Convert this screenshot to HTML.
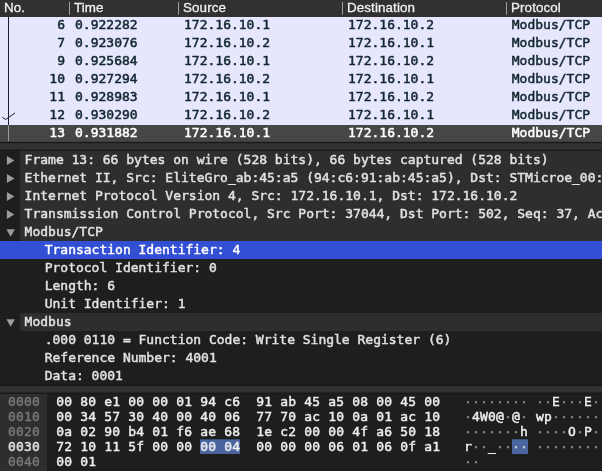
<!DOCTYPE html>
<html><head><meta charset="utf-8">
<style>
html,body{margin:0;padding:0;}
body{width:602px;height:471px;overflow:hidden;background:#1e1e1e;position:relative;font-family:"DejaVu Sans Mono","Liberation Mono",monospace;}
#bg{position:absolute;left:0;top:0;}
#fg{position:absolute;left:0;top:0;width:602px;height:471px;will-change:transform;}
.hdr span{position:absolute;top:0px;white-space:nowrap;color:#f0f0f0;font-family:"Liberation Sans",sans-serif;font-size:13.4px;line-height:16px;letter-spacing:0.1px;-webkit-text-stroke:0.3px #f0f0f0;}
.row{position:absolute;left:0;width:602px;height:18px;color:#12272e;font-size:13px;line-height:18px;white-space:nowrap;-webkit-text-stroke:0.5px currentColor;}
.row span{position:absolute;top:0;}
.row.sel{color:#fff;}
.c1{left:0;width:65px;text-align:right;}
.c2{left:75px;}.c3{left:184px;}.c4{left:348px;}.c5{left:511.8px;}
.t{position:absolute;left:24.6px;letter-spacing:-0.006px;height:18px;line-height:18px;font-size:13px;color:#e2e2e2;white-space:nowrap;-webkit-text-stroke:0.45px currentColor;}
.t.ch{left:44.7px;}
.t.sel{color:#fff;}
.h{position:absolute;left:0;width:602px;height:15px;line-height:15px;font-size:13px;color:#eee;white-space:pre;letter-spacing:0.174px;-webkit-text-stroke:0.45px currentColor;}
.h span{position:absolute;top:0;}
.off{left:8px;color:#777;}
.hx{left:56.3px;}
.as{left:464px;color:#8c8c8c;}
.as b{font-weight:normal;color:#eee;}
.as i{font-style:normal;color:#d8d8d8;}
</style></head><body>
<svg id="bg" width="602" height="471" viewBox="0 0 602 471">
<rect x="0" y="0" width="602" height="471" fill="#1e1e1e"/>
<rect x="0" y="0" width="602" height="17" fill="#313131"/>
<rect x="0" y="17" width="602" height="124.5" fill="#e7e6ff"/>
<rect x="0" y="125" width="602" height="16.5" fill="#464646"/>
<rect x="69" y="2" width="1" height="12.7" fill="#a0a0a0"/>
<rect x="178" y="2" width="1" height="12.7" fill="#a0a0a0"/>
<rect x="342" y="2" width="1" height="12.7" fill="#a0a0a0"/>
<rect x="506" y="2" width="1" height="12.7" fill="#a0a0a0"/>
<rect x="8" y="17" width="1" height="108" fill="#1c1c2a"/>
<rect x="8" y="125" width="1" height="16.5" fill="#9a9a9a"/>
<polyline points="2.3,117.3 5.6,119.5 15,113" fill="none" stroke="#1c1c2a" stroke-width="1"/>
<rect x="0" y="141.5" width="602" height="9.5" fill="#191919"/>
<rect x="0" y="143.2" width="602" height="6.3" fill="#323232"/>
<rect x="20" y="151" width="582" height="18" fill="#2e2e2e"/>
<polygon points="6.9,155.9 14.4,160.4 6.9,164.9" fill="#9c9c9c"/>
<rect x="20" y="169" width="582" height="18" fill="#2e2e2e"/>
<polygon points="6.9,173.9 14.4,178.4 6.9,182.9" fill="#9c9c9c"/>
<rect x="20" y="187" width="582" height="18" fill="#2e2e2e"/>
<polygon points="6.9,191.9 14.4,196.4 6.9,200.9" fill="#9c9c9c"/>
<rect x="20" y="205" width="582" height="18" fill="#2e2e2e"/>
<polygon points="6.9,209.9 14.4,214.4 6.9,218.9" fill="#9c9c9c"/>
<rect x="20" y="223" width="582" height="18" fill="#2e2e2e"/>
<polygon points="6.4,229.3 14.9,229.3 10.65,236.7" fill="#9c9c9c"/>
<rect x="0" y="241" width="602" height="18" fill="#3350d4"/>
<rect x="20" y="313" width="582" height="18" fill="#2e2e2e"/>
<polygon points="6.4,319.3 14.9,319.3 10.65,326.7" fill="#9c9c9c"/>
<rect x="0" y="384.7" width="602" height="9.300000000000011" fill="#191919"/>
<rect x="0" y="386.2" width="602" height="6.3" fill="#323232"/>
<rect x="0" y="394" width="47" height="77" fill="#2e2e2e"/>
<rect x="200" y="439.3" width="40" height="14.7" fill="#4a64a0"/>
<rect x="512" y="439.3" width="16" height="14.7" fill="#4a64a0"/>
</svg>
<div id="fg">
<div class="hdr"><span style="left:4px">No.</span><span style="left:74px">Time</span><span style="left:183px">Source</span><span style="left:347px">Destination</span><span style="left:511px">Protocol</span></div>
<div class="row" style="top:16.0px"><span class="c1">6</span><span class="c2">0.922282</span><span class="c3">172.16.10.1</span><span class="c4">172.16.10.2</span><span class="c5">Modbus/TCP</span></div>
<div class="row" style="top:34.0px"><span class="c1">7</span><span class="c2">0.923076</span><span class="c3">172.16.10.2</span><span class="c4">172.16.10.1</span><span class="c5">Modbus/TCP</span></div>
<div class="row" style="top:52.0px"><span class="c1">9</span><span class="c2">0.925684</span><span class="c3">172.16.10.1</span><span class="c4">172.16.10.2</span><span class="c5">Modbus/TCP</span></div>
<div class="row" style="top:70.0px"><span class="c1">10</span><span class="c2">0.927294</span><span class="c3">172.16.10.2</span><span class="c4">172.16.10.1</span><span class="c5">Modbus/TCP</span></div>
<div class="row" style="top:88.0px"><span class="c1">11</span><span class="c2">0.928983</span><span class="c3">172.16.10.1</span><span class="c4">172.16.10.2</span><span class="c5">Modbus/TCP</span></div>
<div class="row" style="top:106.0px"><span class="c1">12</span><span class="c2">0.930290</span><span class="c3">172.16.10.2</span><span class="c4">172.16.10.1</span><span class="c5">Modbus/TCP</span></div>
<div class="row sel" style="top:124.0px"><span class="c1">13</span><span class="c2">0.931882</span><span class="c3">172.16.10.1</span><span class="c4">172.16.10.2</span><span class="c5">Modbus/TCP</span></div>
<div class="t" style="top:151px">Frame 13: 66 bytes on wire (528 bits), 66 bytes captured (528 bits)</div>
<div class="t" style="top:169px">Ethernet II, Src: EliteGro_ab:45:a5 (94:c6:91:ab:45:a5), Dst: STMicroe_00:01:02 (00:80:e1:00:00:01)</div>
<div class="t" style="top:187px">Internet Protocol Version 4, Src: 172.16.10.1, Dst: 172.16.10.2</div>
<div class="t" style="top:205px">Transmission Control Protocol, Src Port: 37044, Dst Port: 502, Seq: 37, Ack: 37, Len: 12</div>
<div class="t" style="top:223px">Modbus/TCP</div>
<div class="t ch sel" style="top:241px">Transaction Identifier: 4</div>
<div class="t ch" style="top:259px">Protocol Identifier: 0</div>
<div class="t ch" style="top:277px">Length: 6</div>
<div class="t ch" style="top:295px">Unit Identifier: 1</div>
<div class="t" style="top:313px">Modbus</div>
<div class="t ch" style="top:331px">.000 0110 = Function Code: Write Single Register (6)</div>
<div class="t ch" style="top:349px">Reference Number: 4001</div>
<div class="t ch" style="top:367px">Data: 0001</div>
<div class="h" style="top:394px"><span class="off">0000</span><span class="hx">00 80 e1 00 00 01 94 c6  91 ab 45 a5 08 00 45 00</span><span class="as">········ ··<b>E</b>···<b>E</b>·</span></div>
<div class="h" style="top:409px"><span class="off">0010</span><span class="hx">00 34 57 30 40 00 40 06  77 70 ac 10 0a 01 ac 10</span><span class="as">·<b>4W0@</b>·<b>@</b>· <b>wp</b>······</span></div>
<div class="h" style="top:424px"><span class="off">0020</span><span class="hx">0a 02 90 b4 01 f6 ae 68  1e c2 00 00 4f a6 50 18</span><span class="as">·······<b>h</b> ····<b>O</b>·<b>P</b>·</span></div>
<div class="h" style="top:439px"><span class="off" style="color:#e0e0e0">0030</span><span class="hx">72 10 11 5f 00 00 00 04  00 00 00 06 01 06 0f a1</span><span class="as"><b>r</b>··<b>_</b>··<i>··</i> ········</span></div>
<div class="h" style="top:454px"><span class="off">0040</span><span class="hx">00 01</span><span class="as">··</span></div>
</div></body></html>
